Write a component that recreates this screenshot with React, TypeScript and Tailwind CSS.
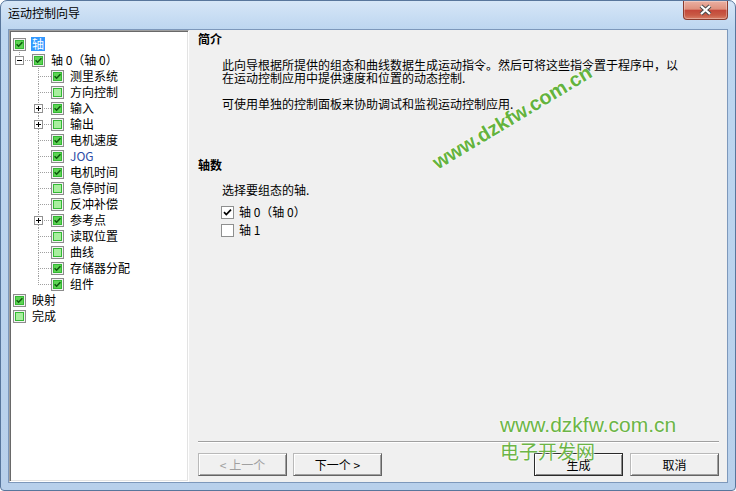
import React from 'react';

type TreeNode = {
  label: string;
  level: 0 | 1 | 2;
  checked: boolean;
  exp?: '+' | '-';
  last?: boolean;
  selected?: boolean;
  blue?: boolean;
};

const nodes: TreeNode[] = [
  { label: '轴', level: 0, checked: true, selected: true },
  { label: '轴 0（轴 0）', level: 1, checked: true, exp: '-', last: true },
  { label: '测里系统', level: 2, checked: true },
  { label: '方向控制', level: 2, checked: false },
  { label: '输入', level: 2, checked: true, exp: '+' },
  { label: '输出', level: 2, checked: false, exp: '+' },
  { label: '电机速度', level: 2, checked: true },
  { label: 'JOG', level: 2, checked: true, blue: true },
  { label: '电机时间', level: 2, checked: true },
  { label: '急停时间', level: 2, checked: false },
  { label: '反冲补偿', level: 2, checked: false },
  { label: '参考点', level: 2, checked: true, exp: '+' },
  { label: '读取位置', level: 2, checked: false },
  { label: '曲线', level: 2, checked: false },
  { label: '存储器分配', level: 2, checked: true },
  { label: '组件', level: 2, checked: true, last: true },
  { label: '映射', level: 0, checked: true },
  { label: '完成', level: 0, checked: false },
];

function TreeCheck({ checked }: { checked: boolean }) {
  return (
    <svg width="13" height="13" viewBox="0 0 13 13" className="shrink-0">
      <rect x="0.5" y="0.5" width="12" height="12" fill="#f3f3f3" stroke="#8c8c8c" />
      <rect x="2" y="2" width="9" height="9" fill="#34b834" />
      <rect x="3" y="3" width="7" height="7" fill={checked ? '#5ed454' : '#a8ee9e'} />
      {checked && <path d="M3.6 6.2 L5.6 8.2 L9.4 4.2" stroke="#0f5a0f" strokeWidth="1.6" fill="none" />}
    </svg>
  );
}

function Expander({ plus }: { plus: boolean }) {
  return (
    <svg width="9" height="9" viewBox="0 0 9 9">
      <rect x="0.5" y="0.5" width="8" height="8" fill="#fff" stroke="#919191" />
      <path d="M2 4.5 H7" stroke="#000" />
      {plus && <path d="M4.5 2 V7" stroke="#000" />}
    </svg>
  );
}

function Connector({ last, exp }: { last?: boolean; exp?: '+' | '-' }) {
  return (
    <div className="relative w-[19px] h-[16px] shrink-0">
      <div className="ml-[6px] h-[9px] w-[13px] border-l border-b border-dotted border-[#a0a0a0]" />
      {!last && <div className="ml-[6px] h-[7px] border-l border-dotted border-[#a0a0a0]" />}
      {exp && (
        <div className="absolute left-[2px] top-[4px] flex">
          <Expander plus={exp === '+'} />
        </div>
      )}
    </div>
  );
}

function TreeRow({ n }: { n: TreeNode }) {
  return (
    <div className="flex h-[16px] items-center">
      {n.level === 2 && <div className="w-[19px] shrink-0" />}
      {n.level >= 1 && <Connector last={n.last} exp={n.exp} />}
      <TreeCheck checked={n.checked} />
      <span
        className={`ml-[5px] px-px leading-[14px] whitespace-nowrap ${
          n.selected ? 'bg-[#3399ff] text-white' : n.blue ? 'text-[#2a4aa6]' : 'text-black'
        }`}
      >
        {n.label}
      </span>
    </div>
  );
}

function Box({ checked }: { checked: boolean }) {
  return (
    <span className="w-[13px] h-[13px] border border-[#8e8f8f] bg-white shrink-0 flex items-center justify-center">
      {checked && (
        <svg width="11" height="11" viewBox="0 0 11 11">
          <path d="M2 5.2 L4.3 7.6 L9 2.6" stroke="#000" strokeWidth="1.7" fill="none" />
        </svg>
      )}
    </span>
  );
}

function Btn({ children, disabled, main }: { children: React.ReactNode; disabled?: boolean; main?: boolean }) {
  return (
    <div
      className={`w-[89px] h-[23px] flex items-center justify-center bg-[#f0f0f0] border ${
        main
          ? 'border-[#2b2b2b] shadow-[inset_1px_1px_0_#fff,inset_-1px_-1px_0_#8a8a8a]'
          : 'border-t-[#b9b9b9] border-l-[#b9b9b9] border-r-[#646464] border-b-[#646464] shadow-[inset_1px_1px_0_#fff,inset_-1px_-1px_0_#a0a0a0]'
      } ${disabled ? 'text-[#a0a0a0]' : 'text-black'}`}
    >
      {children}
    </div>
  );
}

export default function App() {
  return (
    <div className="relative w-[736px] h-[491px] bg-white overflow-hidden text-[12px] font-['Noto_Sans_CJK_SC','Noto_Sans',sans-serif]">
      <div className="w-full h-full flex flex-col rounded-t-[7px] rounded-b-[4px] border border-[#58769c] bg-[linear-gradient(to_bottom,#d6e6f7_0px,#bdd6f0_28px,#b8d0eb_100%)]">
        {/* title bar */}
        <div className="h-[28px] flex shrink-0">
          <div className="pl-[7px] pt-[5px] leading-[14px] text-black">运动控制向导</div>
          <div className="ml-auto mr-[7px] w-[45px] h-[19px] rounded-b-[4px] border border-t-0 border-[#8a3b2e] bg-[linear-gradient(to_bottom,#eab0a2_0%,#df917e_45%,#c4483a_52%,#c85a45_78%,#d97f67_100%)] shadow-[inset_0_0_0_1px_rgba(255,255,255,0.3)] flex items-center justify-center">
            <svg width="15" height="12" viewBox="0 0 15 12">
              <path d="M3 2 L12 10 M12 2 L3 10" stroke="#4a4a4a" strokeWidth="4.2" />
              <path d="M3 2 L12 10 M12 2 L3 10" stroke="#fff" strokeWidth="2.2" />
            </svg>
          </div>
        </div>

        {/* client area */}
        <div className="flex-1 mx-[7px] mb-[7px] border border-[#7d98bb] bg-[#f0f0f0] flex min-h-0">
          <div className="w-[180px] shrink-0 bg-white border border-t-[#a0a0a0] border-l-[#a0a0a0] border-r-white border-b-white shadow-[inset_1px_1px_0_#696969,inset_-1px_-1px_0_#e3e3e3] pl-[3px] pt-[5px]">
            {nodes.map((n, i) => (
              <TreeRow key={i} n={n} />
            ))}
          </div>

          <div className="flex-1 flex flex-col pl-[9px] pr-[8px] pb-[6px] text-black">
            <div className="pt-px leading-[16px] font-bold">简介</div>
            <div className="ml-[24px] mt-[11px] leading-[13px] whitespace-nowrap">
              此向导根据所提供的组态和曲线数据生成运动指令。然后可将这些指令置于程序中，以
              <br />
              在运动控制应用中提供速度和位置的动态控制.
            </div>
            <div className="ml-[24px] mt-[13px] leading-[13px]">可使用单独的控制面板来协助调试和监视运动控制应用.</div>

            <div className="mt-[47px] leading-[16px] font-bold">轴数</div>
            <div className="ml-[24px] mt-[9px] leading-[16px]">选择要组态的轴.</div>
            <div className="ml-[23px] mt-[5px] flex flex-col">
              <div className="h-[18px] flex items-center gap-[5px]">
                <Box checked />
                <span>轴 0（轴 0）</span>
              </div>
              <div className="h-[18px] flex items-center gap-[5px]">
                <Box checked={false} />
                <span>轴 1</span>
              </div>
            </div>

            <div className="flex-1" />
            <div className="h-[2px] border-t border-b border-t-[#a0a0a0] border-b-white" />
            <div className="mt-[10px] flex">
              <Btn disabled>&lt; 上一个</Btn>
              <div className="ml-[6px]">
                <Btn>下一个 &gt;</Btn>
              </div>
              <div className="ml-auto">
                <Btn main>生成</Btn>
              </div>
              <div className="ml-[7px]">
                <Btn>取消</Btn>
              </div>
            </div>
          </div>
        </div>
      </div>

      {/* watermarks */}
      <div className="pointer-events-none absolute left-[512px] top-[117px] -translate-x-1/2 -translate-y-1/2 -rotate-[31deg] whitespace-nowrap font-['Liberation_Sans',Arial,sans-serif] font-bold text-[20px] leading-[22px] text-[#64b33e] [text-shadow:0_0_2px_#fff,0_0_2px_#fff]">
        www.dzkfw.com.cn
      </div>
      <div className="pointer-events-none absolute left-[500px] top-[413px] flex flex-col text-[#6cb546] [text-shadow:0_0_2px_#fff,0_0_2px_#fff]">
        <span className="font-['Liberation_Sans',Arial,sans-serif] text-[21px] leading-[24px] whitespace-nowrap">www.dzkfw.com.cn</span>
        <span className="mt-[3px] text-[19px] leading-[22px] whitespace-nowrap">电子开发网</span>
      </div>
    </div>
  );
}
